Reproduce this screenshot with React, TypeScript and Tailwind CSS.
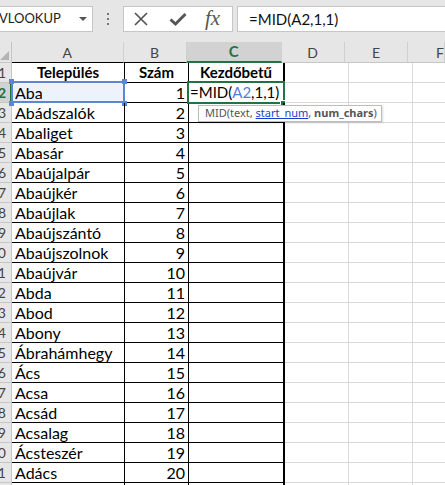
import React from 'react';

const rows: [string, number][] = [
    ['Aba', 1],
    ['Abádszalók', 2],
    ['Abaliget', 3],
    ['Abasár', 4],
    ['Abaújalpár', 5],
    ['Abaújkér', 6],
    ['Abaújlak', 7],
    ['Abaújszántó', 8],
    ['Abaújszolnok', 9],
    ['Abaújvár', 10],
    ['Abda', 11],
    ['Abod', 12],
    ['Abony', 13],
    ['Ábrahámhegy', 14],
    ['Ács', 15],
    ['Acsa', 16],
    ['Acsád', 17],
    ['Acsalag', 18],
    ['Ácsteszér', 19],
    ['Adács', 20],
    ['', 0],
];

function Toolbar() {
    return (
        <div className="h-[42px] bg-[#e6e6e6] flex items-start pt-[6px]">
            {/* Name box */}
            <div className="w-[93px] h-[26px] bg-white border border-l-0 border-[#c6c6c6] flex items-center justify-between pr-[5px]">
                <span className="text-[13px] text-[#222] ml-[-1px]">VLOOKUP</span>
                <span className="w-0 h-0 border-l-[4px] border-r-[4px] border-t-[4px] border-l-transparent border-r-transparent border-t-[#555]" />
            </div>
            <div className="w-[30px] flex flex-col items-center gap-[3px] pt-[7px]">
                <span className="w-[2px] h-[2px] bg-[#777]" />
                <span className="w-[2px] h-[2px] bg-[#777]" />
                <span className="w-[2px] h-[2px] bg-[#777]" />
            </div>
            {/* Cancel / enter / fx */}
            <div className="w-[110px] h-[26px] bg-white border border-[#c6c6c6] flex items-center pl-[9px]">
                <svg width="16" height="16" viewBox="0 0 16 16">
                    <path d="M2 2 L14 14 M14 2 L2 14" stroke="#555" strokeWidth="1.7" fill="none" />
                </svg>
                <svg width="18" height="16" viewBox="0 0 18 16" className="ml-[20px]">
                    <path d="M1.5 8.5 L6.5 13 L16.5 3" stroke="#555" strokeWidth="3" fill="none" />
                </svg>
                <span className="ml-[18px] text-[21px] italic text-[#555] font-['Liberation_Serif',serif] leading-none mt-[-2px]">fx</span>
            </div>
            {/* Formula input */}
            <div className="ml-[4px] flex-1 h-[26px] bg-white border border-r-0 border-[#c6c6c6] flex items-center pl-[11px]">
                <span className="text-[15px] text-[#111]">=MID(A2,1,1)</span>
            </div>
        </div>
    );
}

function ColumnHeaders() {
    const base = 'h-[21px] flex items-center justify-center text-[14px] text-[#444] border-r border-[#d0d0d0]';
    return (
        <div className="flex h-[21px]">
            <div className="w-[12px] h-[21px] bg-[#e6e6e6] border-r border-b border-[#c6c6c6] relative">
                <span className="absolute right-[2px] bottom-[2px] w-0 h-0 border-l-[9px] border-l-transparent border-b-[9px] border-b-[#b4b4b4]" />
            </div>
            <div className={`${base} w-[113px] bg-[#e6e6e6] border-b border-b-black`}>A</div>
            <div className={`${base} w-[64px] bg-[#e6e6e6] border-b border-b-black`}>B</div>
            <div className={`${base} w-[96px] bg-[#d2d2d2] border-b-2 border-b-[#217346] text-[#217346] font-bold text-[15px]`}>C</div>
            <div className={`${base} w-[64px] bg-[#e6e6e6] border-b border-b-[#c6c6c6]`}>D</div>
            <div className={`${base} w-[64px] bg-[#e6e6e6] border-b border-b-[#c6c6c6]`}>E</div>
            <div className={`${base} flex-1 bg-[#e6e6e6] border-b border-b-[#c6c6c6] justify-start pl-[28px]`}>F</div>
        </div>
    );
}

function RowHeader({ n, active }: { n: number; active?: boolean }) {
    return (
        <div
            className={
                active
                    ? 'w-[12px] h-[20px] overflow-hidden bg-[#d2d2d2] border-r-2 border-r-[#217346] border-b border-b-[#c6c6c6] flex items-center justify-end pr-[4px] text-[14px] text-[#217346] font-bold'
                    : 'w-[12px] h-[20px] overflow-hidden bg-[#e6e6e6] border-r border-b border-[#c6c6c6] flex items-center justify-end pr-[5px] text-[14px] text-[#444]'
            }
        >
            <span className="whitespace-nowrap">{n}</span>
        </div>
    );
}

const gray = 'h-[20px] w-[64px] border-r border-b border-[#d9d9d9]';

function HeaderRow() {
    return (
        <div className="flex h-[20px]">
            <RowHeader n={1} />
            <div className="w-[113px] h-[20px] border-r border-b border-black flex items-center justify-center font-bold text-[15px]">Település</div>
            <div className="w-[64px] h-[20px] border-r border-b border-black flex items-center justify-center font-bold text-[15px]">Szám</div>
            <div className="w-[96px] h-[20px] border-r-2 border-b border-black flex items-center justify-center font-bold text-[15px]">Kezdőbetű</div>
            <div className={gray} />
            <div className={gray} />
            <div className="flex-1 h-[20px] border-b border-[#d9d9d9]" />
        </div>
    );
}

function DataRow({ idx, name, num }: { idx: number; name: string; num: number }) {
    const first = idx === 2;
    return (
        <div className="flex h-[20px]">
            <RowHeader n={idx} active={first} />
            <div className={`w-[113px] h-[20px] border-r border-b border-black flex items-center pl-[3px] text-[16px] relative ${first ? 'bg-[#eef2fb]' : ''}`}>
                {name}
                {first && (
                    <>
                        <div className="absolute left-[-1px] top-[-2px] w-[114px] h-[22px] border-2 border-[#5b86d6]" />
                        <span className="absolute left-[-3px] top-[-4px] w-[5px] h-[5px] bg-[#5b86d6]" />
                        <span className="absolute right-[-3px] top-[-4px] w-[5px] h-[5px] bg-[#5b86d6]" />
                        <span className="absolute left-[-3px] bottom-[-4px] w-[5px] h-[5px] bg-[#5b86d6]" />
                        <span className="absolute right-[-3px] bottom-[-4px] w-[5px] h-[5px] bg-[#5b86d6]" />
                    </>
                )}
            </div>
            <div className="w-[64px] h-[20px] border-r border-b border-black flex items-center justify-end pr-[3px] text-[16px]">
                {num > 0 ? num : ''}
            </div>
            <div className="w-[96px] h-[20px] border-r-2 border-b border-black flex items-center text-[16px] relative">
                {first && (
                    <>
                        <div className="absolute left-[-2px] top-[-2px] w-[98px] h-[23px] border-2 border-[#217346] bg-white flex items-center pl-[1px] text-[15px]">
                            <span>=MID(<span className="text-[#4f7fd9]">A2</span>,1,1)</span>
                        </div>
                        <span className="absolute right-[-3px] bottom-[-4px] w-[6px] h-[6px] bg-[#217346] border border-white" />
                        <div className="absolute left-[9px] top-[22px] w-[184px] h-[17px] bg-white border border-[#bdbdbd] shadow-[1px_1px_2px_rgba(0,0,0,0.15)] flex items-center pl-[6px] z-10 text-[11px] text-[#555] font-['Noto_Sans',sans-serif] whitespace-nowrap">
                            MID(text,&nbsp;<span className="text-[#1a3dd1] underline">start_num</span>,&nbsp;<span className="font-bold">num_chars</span>)
                        </div>
                    </>
                )}
            </div>
            <div className={gray} />
            <div className={gray} />
            <div className="flex-1 h-[20px] border-b border-[#d9d9d9]" />
        </div>
    );
}

export default function App() {
    return (
        <div className="w-[445px] h-[485px] overflow-hidden bg-white text-black font-['Lato',sans-serif]">
            <Toolbar />
            <ColumnHeaders />
            <HeaderRow />
            {rows.map(([name, num], i) => (
                <DataRow key={i} idx={i + 2} name={name} num={num} />
            ))}
        </div>
    );
}
